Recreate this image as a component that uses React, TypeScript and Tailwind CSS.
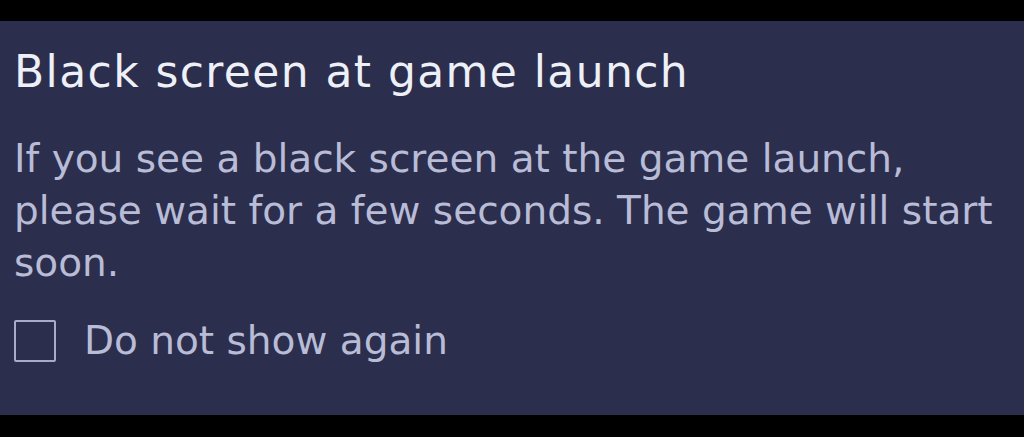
import React from "react";

export default function App() {
  return (
    <div className="w-[1024px] h-[437px] bg-black flex flex-col" style={{ fontFamily: "'DejaVu Sans', sans-serif" }}>
      <div className="h-[21px] shrink-0" />
      <div className="h-[394px] bg-[#2c2e4d] pl-[14px] pr-[14px] flex flex-col">
        <h1 className="text-[44px] leading-[52px] tracking-[1.4px] text-[#eef0f8] mt-[25px] font-normal">Black screen at game launch</h1>
        <p className="text-[39px] leading-[52px] text-[#b9bcd6] mt-[35px]">
          If you see a black screen at the game launch, please wait for a few seconds. The game will start soon.
        </p>
        <label className="flex items-center gap-[28px] mt-[26px]">
          <span className="w-[42px] h-[42px] border-2 border-[#a9acc8] rounded-[2px] shrink-0" />
          <span className="text-[39px] leading-[52px] text-[#b9bcd6]">Do not show again</span>
        </label>
      </div>
    </div>
  );
}
